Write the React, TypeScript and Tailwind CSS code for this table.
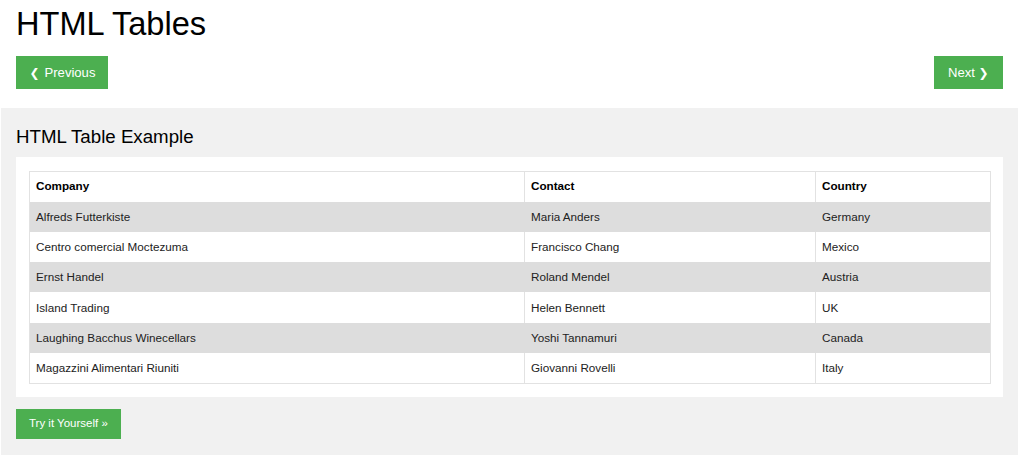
const rows = [
  ['Alfreds Futterkiste', 'Maria Anders', 'Germany'],
  ['Centro comercial Moctezuma', 'Francisco Chang', 'Mexico'],
  ['Ernst Handel', 'Roland Mendel', 'Austria'],
  ['Island Trading', 'Helen Bennett', 'UK'],
  ['Laughing Bacchus Winecellars', 'Yoshi Tannamuri', 'Canada'],
  ['Magazzini Alimentari Riuniti', 'Giovanni Rovelli', 'Italy'],
];

const font = { fontFamily: '"Liberation Sans", Arial, sans-serif' };
const glyph = { fontFamily: '"DejaVu Sans", sans-serif' };

export default function App() {
  return (
    <div className="w-[1024px] h-[455px] overflow-hidden bg-white text-black" style={font}>
      {/* page header */}
      <div className="px-4 pt-[6px]">
        <h1 className="text-[32.6px] leading-[36px] font-normal">HTML Tables</h1>
        <div className="mt-[14px] flex justify-between pr-[5px]">
          <button className="h-[33px] pl-[15px] pr-[13px] bg-[#4CAF50] text-white text-[13.1px] flex items-center gap-[6.5px]">
            <span className="w-[7px] text-[12px] font-bold leading-none flex justify-center" style={glyph}>❮</span>
            Previous
          </button>
          <button className="h-[33px] pl-[14px] pr-[16px] bg-[#4CAF50] text-white text-[13.1px] flex items-center gap-[5px]">
            Next
            <span className="w-[7px] text-[12px] font-bold leading-none flex justify-center" style={glyph}>❯</span>
          </button>
        </div>
      </div>

      {/* example panel */}
      <div className="mt-[19px] ml-px w-[1017px] h-[400px] bg-[#f1f1f1] px-[15px] pt-[17.5px]">
        <h2 className="text-[18.7px] leading-[21px] font-normal">HTML Table Example</h2>
        <div className="mt-[10.5px] bg-white pt-[14px] pb-[13px] px-[13px]">
          <table className="w-[961px] border-collapse border border-[#e2e2e2] text-[11.7px] table-fixed">
            <colgroup>
              <col className="w-[495px]" />
              <col className="w-[291px]" />
              <col className="w-[175px]" />
            </colgroup>
            <thead>
              <tr className="h-[30px] bg-white">
                {['Company', 'Contact', 'Country'].map((h, i) => (
                  <th
                    key={h}
                    className={`text-left font-bold px-[6px] pb-px text-black ${i > 0 ? 'border-l border-[#e2e2e2]' : ''}`}
                  >
                    {h}
                  </th>
                ))}
              </tr>
            </thead>
            <tbody>
              {rows.map((r, idx) => {
                const gray = idx % 2 === 0;
                return (
                  <tr key={idx} className={`h-[30.3px] ${gray ? 'bg-[#dddddd]' : 'bg-white'}`}>
                    {r.map((c, i) => (
                      <td
                        key={i}
                        className={`px-[6px] text-[#222] ${
                          i > 0 ? (gray ? 'border-l border-[#dddddd]' : 'border-l border-[#e2e2e2]') : ''
                        }`}
                      >
                        {c}
                      </td>
                    ))}
                  </tr>
                );
              })}
            </tbody>
          </table>
        </div>
        <button className="mt-[12px] h-[30px] px-[13px] bg-[#4CAF50] text-white text-[11.5px]">
          Try it Yourself »
        </button>
      </div>
    </div>
  );
}
